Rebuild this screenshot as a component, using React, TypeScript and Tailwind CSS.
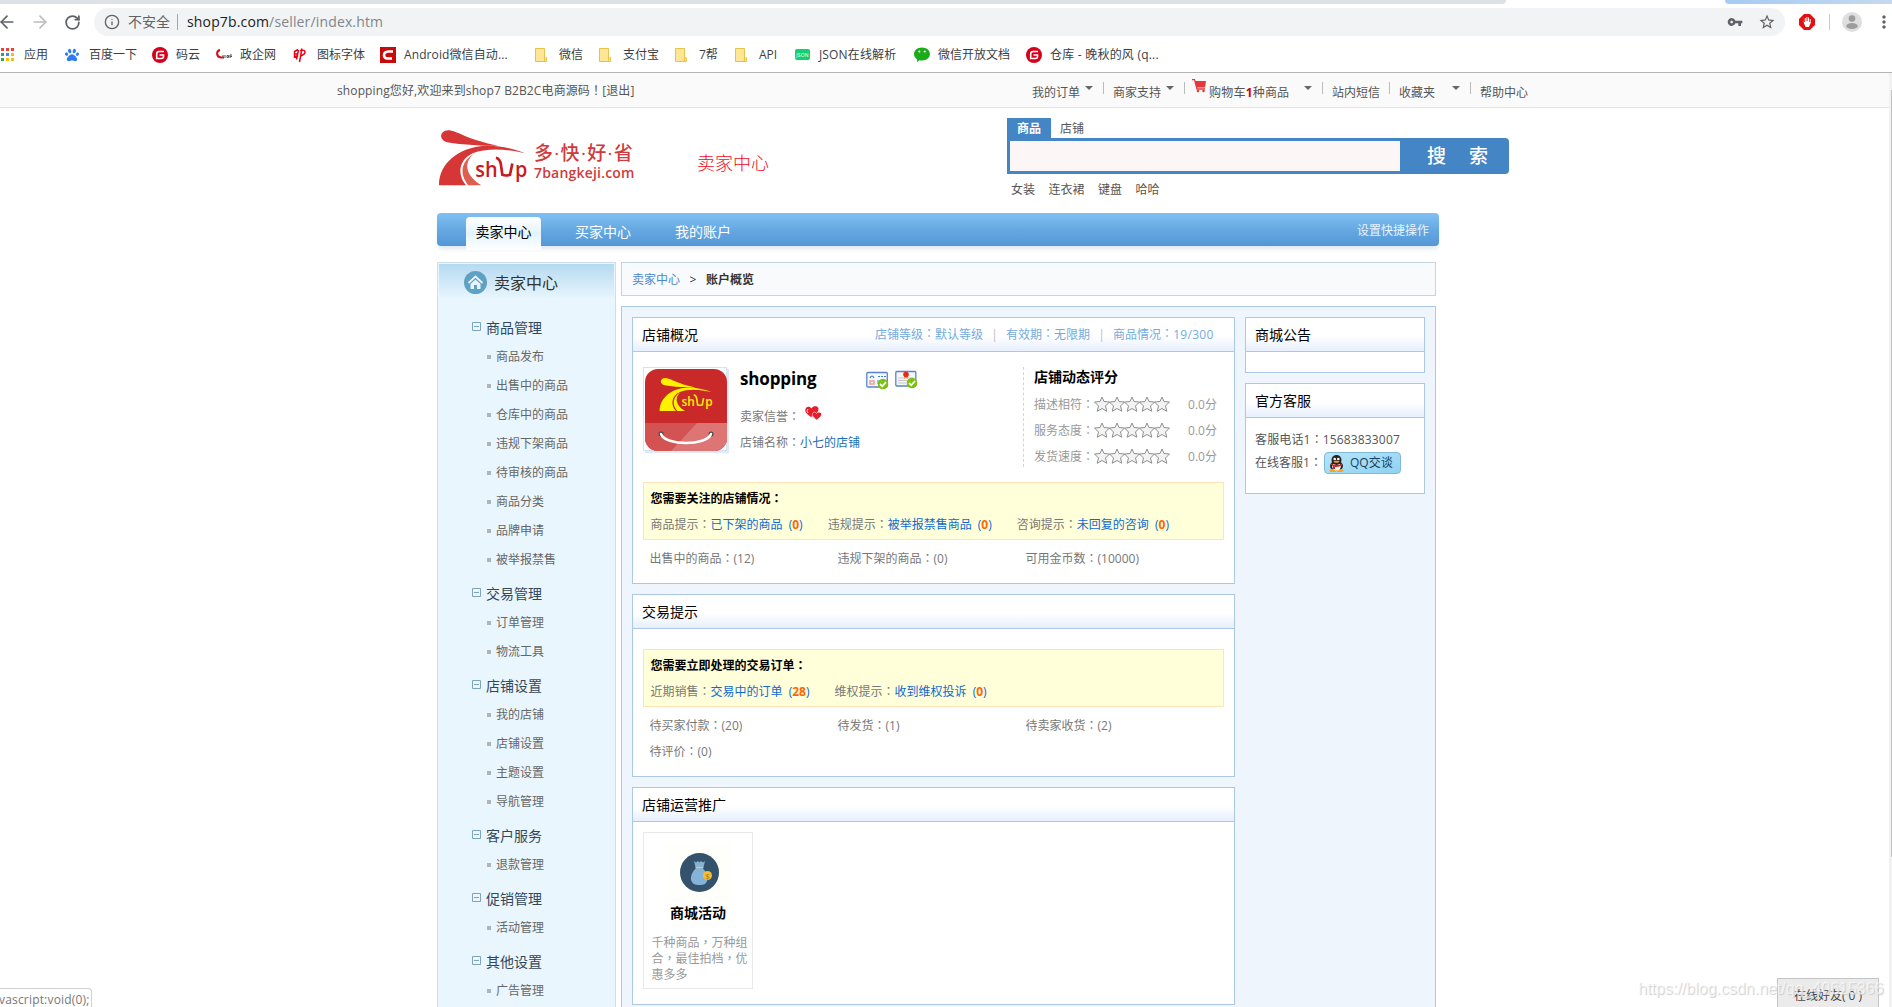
import type { ReactNode } from "react"
import { ArrowLeft, ArrowRight, Info, RotateCw } from "lucide-react"
import { FaPaw } from "react-icons/fa"
import { MdVpnKey, MdStarBorder, MdMoreVert } from "react-icons/md"

const menus = [
  { title: "商品管理", items: ["商品发布", "出售中的商品", "仓库中的商品", "违规下架商品", "待审核的商品", "商品分类", "品牌申请", "被举报禁售"] },
  { title: "交易管理", items: ["订单管理", "物流工具"] },
  { title: "店铺设置", items: ["我的店铺", "店铺设置", "主题设置", "导航管理"] },
  { title: "客户服务", items: ["退款管理"] },
  { title: "促销管理", items: ["活动管理"] },
  { title: "其他设置", items: ["广告管理"] },
]

// Full-width punctuation sits in the middle of its cell in the TC face
function Cn({ text }: { text: string }) {
  return (
    <>
      {text.split(/([：，！])/).map((part, i) =>
        i % 2 ? <span key={i} className="font-['Noto_Sans_CJK_TC',sans-serif] leading-none">{part}</span> : part
      )}
    </>
  )
}

function AppsIcon() {
  const colors = ["#ea4335", "#ea4335", "#ea4335", "#34a853", "#4285f4", "#fbbc05", "#34a853", "#fbbc05", "#fbbc05"]
  return (
    <svg width="14" height="14" viewBox="0 0 14 14">
      {colors.map((c, i) => (
        <rect key={i} x={(i % 3) * 5 + 1} y={Math.floor(i / 3) * 5} width="3" height="3" fill={c} />
      ))}
    </svg>
  )
}

function GiteeIcon() {
  return (
    <svg width="16" height="16" viewBox="0 0 16 16">
      <circle cx="8" cy="8" r="8" fill="#d7001b" />
      <path d="M12 4.500H7.200Q4.700 4.500 4.700 7v4.500h4.800q2 0 2-2V8H7.500" fill="none" stroke="#fff" strokeWidth="1.600" />
    </svg>
  )
}

function FolderIcon() {
  return (
    <svg width="12" height="14" viewBox="0 0 12 14">
      <path d="M.5.5h9v9.300h2v3.700H.5z" fill="#ffe694" stroke="#e8c34c" />
      <path d="M9.500 9.500v4" stroke="#e8c34c" />
    </svg>
  )
}

function GovIcon() {
  return (
    <svg width="16" height="14" viewBox="0 0 16 14">
      <path d="M4 2C0 3 0 9 5 9.500h3" fill="none" stroke="#d0111b" strokeWidth="2" />
      <path d="M7 7v3M9 7v3M11 7.500h1.500v2H11zM14 7v3M14 7h2M14 8.500h2" stroke="#555" fill="none" />
    </svg>
  )
}

function SealIcon() {
  return (
    <svg width="13" height="16" viewBox="0 0 13 16">
      <path d="M5 2.500 1.500 4.500v5.500L5 8.500M1.500 7H5M3.500 12.500 5.500 3M7 3.500q5-1 5 1.500t-4.500 4M9 1.500 6.500 15" fill="none" stroke="#e60012" strokeWidth="1.500" />
    </svg>
  )
}

function CsdnIcon() {
  return (
    <svg width="16" height="16" viewBox="0 0 16 16">
      <rect width="16" height="16" fill="#c90a0a" />
      <path d="M13 4.500H8.500C5 4.500 4 6.500 4 8.300s1 3.200 3.500 3.200H12" fill="none" stroke="#fff" strokeWidth="2.600" />
    </svg>
  )
}

function JsonIcon() {
  return (
    <svg width="15" height="11" viewBox="0 0 15 11">
      <rect width="15" height="11" rx="2" fill="#12d071" />
      <text x="7.500" y="7.500" fontSize="5" fill="#fff" textAnchor="middle" fontFamily="Open Sans">JSON</text>
    </svg>
  )
}

function WechatIcon() {
  return (
    <svg width="16" height="15" viewBox="0 0 16 15">
      <path d="M8 .5c4.400 0 8 2.800 8 6.500s-3.600 6.500-8 6.500c-1 0-1.800-.1-2.600-.3L3 15v-2.700C1.200 11.100 0 9.200 0 7 0 3.300 3.600.5 8 .5z" fill="#1aad19" />
      <circle cx="5.300" cy="4.500" r="1.100" fill="#fff" />
      <circle cx="10.700" cy="4.500" r="1.100" fill="#fff" />
    </svg>
  )
}

const bookmarks: { icon: ReactNode; label: string; cls: string }[] = [
  { icon: <AppsIcon />, label: "应用", cls: "w-[65px]" },
  { icon: <FaPaw className="h-[14px] w-[14px] text-[#2c7df0]" />, label: "百度一下", cls: "w-[87px]" },
  { icon: <GiteeIcon />, label: "码云", cls: "w-[64px]" },
  { icon: <GovIcon />, label: "政企网", cls: "w-[77px]" },
  { icon: <SealIcon />, label: "图标字体", cls: "w-[87px]" },
  { icon: <CsdnIcon />, label: "Android微信自动...", cls: "w-[155px] tracking-[0.1px]" },
  { icon: <FolderIcon />, label: "微信", cls: "w-[64px]" },
  { icon: <FolderIcon />, label: "支付宝", cls: "w-[76px]" },
  { icon: <FolderIcon />, label: "7帮", cls: "w-[60px]" },
  { icon: <FolderIcon />, label: "API", cls: "w-[60px]" },
  { icon: <JsonIcon />, label: "JSON在线解析", cls: "w-[119px] tracking-[0.150px]" },
  { icon: <WechatIcon />, label: "微信开放文档", cls: "w-[112px]" },
  { icon: <GiteeIcon />, label: "仓库 - 晚秋的风 (q...", cls: "w-[140px] tracking-[0.220px]" },
]

function Browser() {
  return (
    <div className="h-[73px] border-b border-[#b4b4b4] bg-white">
      {/* Tab strip */}
      <div className="flex h-1 justify-between">
        <div className="w-[1506px] rounded-br-md bg-[#dee1e6]" />
        <div className="w-[167px] rounded-bl-md bg-gradient-to-r from-[#a5cbf3] to-[#c5d9ee]" />
      </div>

      {/* Address bar */}
      <div className="flex h-9 items-center">
        <ArrowLeft className="-ml-[3px] h-5 w-5 shrink-0 text-[#5f6368]" />
        <ArrowRight className="ml-[13px] h-5 w-5 shrink-0 text-[#babcbe]" />
        <RotateCw className="ml-[14px] h-[17px] w-[17px] shrink-0 text-[#5f6368]" strokeWidth={2.5} />
        <div className="ml-[13px] flex h-7 w-[1691px] shrink-0 items-center rounded-full bg-[#f1f3f4] text-sm text-[#80868b]">
          <Info className="ml-[10px] h-4 w-4 text-[#5f6368]" />
          <span className="ml-2 w-[42px] text-[#5f6368]">不安全</span>
          <span className="ml-[7px] h-4 w-px bg-[#a5a8ab]" />
          <span className="ml-[9px] tracking-[0.150px]"><span className="text-[#202124]">shop7b.com</span>/seller/index.htm</span>
          <MdVpnKey className="ml-auto h-4 w-4 text-[#5f6368]" />
          <MdStarBorder className="mr-[9px] ml-[15px] h-[18px] w-[18px] text-[#5f6368]" />
        </div>
        <svg className="ml-[14px] shrink-0" width="16" height="16" viewBox="0 0 16 16">
          <path d="M5 0h6l5 5v6l-5 5H5l-5-5V5z" fill="#e60f12" />
          <path d="M4.800 5v4l1.800 4h3.300l1.800-4V5h-1v3h-.7V3.500h-1V7h-.6V3h-1v4h-.6V4h-1v4h-.7z" fill="#fff" />
        </svg>
        <span className="ml-[14px] h-4 w-px shrink-0 bg-[#c8cacc]" />
        <svg className="ml-[12px] shrink-0" width="20" height="20" viewBox="0 0 20 20">
          <circle cx="10" cy="10" r="10" fill="#dedede" />
          <circle cx="10" cy="6.500" r="3.300" fill="#9c9c9c" />
          <ellipse cx="10" cy="14" rx="5.800" ry="3" fill="#9c9c9c" />
        </svg>
        <MdMoreVert className="-mr-2 ml-[12px] h-5 w-5 shrink-0 text-[#5f6368]" />
      </div>

      {/* Bookmarks */}
      <div className="flex h-7 items-center pt-px text-xs text-[#3c4043]">
        {bookmarks.map((b) => (
          <div key={b.label} className={`flex shrink-0 items-center whitespace-nowrap ${b.cls}`}>
            <span className="flex w-6 shrink-0">{b.icon}</span>
            {b.label}
          </div>
        ))}
      </div>
    </div>
  )
}

function Caret({ className = "" }: { className?: string }) {
  return (
    <svg className={`-mt-[10px] shrink-0 ${className}`} width="8" height="4" viewBox="0 0 8 4">
      <path d="M0 0h8L4 4z" fill="#666" />
    </svg>
  )
}

function Sep({ className = "" }: { className?: string }) {
  return <span className={`-mt-[10px] h-3 w-px shrink-0 bg-[#bbb] ${className}`} />
}

function TopBar() {
  return (
    <div className="flex h-[35px] items-center border-b border-[#e3e3e3] bg-[#fafafa] pt-px text-xs text-[#555]">
      <span className="ml-[337px] w-[695px] tracking-[0.120px]"><Cn text="shopping您好,欢迎来到shop7 B2B2C电商源码！[退出]" /></span>
      <div className="flex items-center pt-[4px]">
        <span>我的订单</span>
        <Caret className="ml-[5px]" />
        <Sep className="mr-[9px] ml-[10px]" />
        <span>商家支持</span>
        <Caret className="ml-[5px]" />
        <Sep className="ml-[10px]" />
        <svg className="-mt-[13px] ml-[7px]" width="14" height="14" viewBox="0 0 14 14">
          <path d="M0 .7h2.500L5 10h8" fill="none" stroke="#e4393c" strokeWidth="1.300" />
          <path d="M3 2h11l-1 6.500H4.700z" fill="#e4393c" />
          <circle cx="6" cy="12" r="1.300" fill="#e4393c" />
          <circle cx="11.500" cy="12" r="1.300" fill="#e4393c" />
        </svg>
        <span className="ml-[3px] w-[95px] tracking-[0.2px]">购物车<b className="text-[#c00]">1</b>种商品</span>
        <Caret />
        <Sep className="mr-[9px] ml-[10px]" />
        <span>站内短信</span>
        <Sep className="mr-[9px] ml-[9px]" />
        <span className="w-[53px]">收藏夹</span>
        <Caret />
        <Sep className="mr-[9px] ml-[10px]" />
        <span>帮助中心</span>
      </div>
    </div>
  )
}

// Road-shaped "shop" mark, used in the header and on the shop avatar
function ShopMark({ color, accent, text, className }: { color: string; accent: string; text: string; className: string }) {
  return (
    <svg className={className} viewBox="24 57 270 170">
      <path d="M54 60C80 60 105 86 205 107C165 107 95 104 52 96C24 88 30 61 54 60Z" fill={color} />
      <path d="M287 130C240 112 200 105 165 107C85 112 27 160 27 225H108C82 195 84 150 128 129C170 112 235 116 287 130Z" fill={color} />
      <path d="M115 225C88 192 92 155 130 132C98 160 110 198 154 225Z" fill={accent} />
      <text x="136" y="200" fontSize="66" fontWeight="600" fontFamily="Open Sans" fill={text} textLength="67" lengthAdjust="spacingAndGlyphs">sh</text>
      <path d="M198 143Q211 147 213 165L217 194Q228 198 240 194L247 160" fill="none" stroke={text} strokeWidth="8" />
      <text x="255" y="200" fontSize="66" fontWeight="600" fontFamily="Open Sans" fill={text} textLength="37" lengthAdjust="spacingAndGlyphs">p</text>
    </svg>
  )
}

function Header() {
  return (
    <div className="flex h-[105px] items-start">
      <ShopMark className="mt-[21px] ml-[438px] h-[57px] w-[90px]" color="#d63635" accent="#dc5f52" text="#c91a1c" />
      <div className="mt-[33px] ml-[6px] w-[163px] font-medium text-[#d03a3c]">
        <div className="text-[19px] leading-[24px] tracking-[1.300px]">多·快·好·省</div>
        <div className="-mt-[2px] text-[14px] leading-[20px] font-semibold tracking-[0.2px]">7bangkeji.com</div>
      </div>
      <div className="mt-[42px] w-[310px] text-[18px] leading-[26px] font-light text-[#f50a1a]">卖家中心</div>
      <div className="mt-[10px] text-xs text-[#555]">
        <div className="flex h-5 leading-[22px]">
          <span className="w-[44px] bg-[#4485c5] text-center font-bold text-white">商品</span>
          <span className="ml-[9px]">店铺</span>
        </div>
        <div className="flex h-9 w-[502px] items-center rounded-r bg-[#4485c5] pl-[3px]">
          <div className="h-[30px] w-[390px] bg-[#fdf6f6]" />
          <div className="flex flex-1 justify-between pt-[2px] pr-[21px] pl-[27px] text-[19px] font-medium text-white">
            <span>搜</span>
            <span>索</span>
          </div>
        </div>
        <div className="mt-[7px] flex gap-[13.500px] pl-1 leading-[18px]">
          <span>女装</span>
          <span>连衣裙</span>
          <span>键盘</span>
          <span>哈哈</span>
        </div>
      </div>
    </div>
  )
}

function Nav() {
  return (
    <div className="h-[49px] w-[1002px]">
      <div className="flex h-[33px] rounded-sm bg-gradient-to-b from-[#80c1f4] via-[#66a8e1] to-[#5397d6] text-sm leading-[30px] text-white shadow-[0_4px_4px_-1px_#dfe8f0]">
        <span className="mt-1 ml-[29px] h-[33px] w-[75px] rounded-t bg-gradient-to-b from-white via-[#e4f3fd] to-white text-center text-black">卖家中心</span>
        <span className="mt-1 ml-[34px]">买家中心</span>
        <span className="mt-1 ml-[44px]">我的账户</span>
        <span className="mt-[3px] mr-[10px] ml-auto text-xs leading-[30px] text-[#e6f4ff]">设置快捷操作</span>
      </div>
    </div>
  )
}

function Sidebar() {
  return (
    <div className="w-[179px] shrink-0 border border-[#cfdfe9] bg-[#eaf6fd] p-px">
      <div className="flex h-[34px] items-center bg-gradient-to-b from-[#b4daf0] to-[#e8f5fd] pl-[25px] text-base text-[#333]">
        <svg className="mt-[3px] mr-[7px]" width="23" height="23" viewBox="0 0 23 23">
          <circle cx="11.500" cy="11.500" r="11.500" fill="#5fa1c4" />
          <path d="M4.500 12 11.500 5.500l7 6.500" fill="none" stroke="#e6f4fb" strokeWidth="1.800" />
          <path d="M6.500 13l5-4.600 5 4.600v5h-3.500v-4h-3v4H6.500z" fill="#e6f4fb" />
        </svg>
        <span className="mt-[4px]">卖家中心</span>
      </div>
      <div className="pt-[10px]">
        {menus.map((m) => (
          <div key={m.title} className="pt-[5px]">
            <div className="flex h-[29px] items-center pl-[33px] text-sm text-[#33475b]">
              <svg className="-mt-[3px] mr-[5px]" width="9" height="9" viewBox="0 0 9 9">
                <path d="M.5.5h8v8h-8zM2 4.500h5" fill="none" stroke="#7fa5bd" />
              </svg>
              {m.title}
            </div>
            {m.items.map((item) => (
              <div key={item} className="flex h-[29px] items-center pl-[48px] text-xs text-[#666]">
                <span className="mr-[5px] h-1 w-1 bg-[#b3b3b3]" />
                {item}
              </div>
            ))}
          </div>
        ))}
      </div>
    </div>
  )
}

function Panel({ title, extra, className = "", children }: { title: string; extra?: ReactNode; className?: string; children?: ReactNode }) {
  return (
    <div className={`border border-[#abc8e6] bg-white ${className}`}>
      <div className="flex h-[34px] items-center justify-between border-b border-[#abc8e6] bg-gradient-to-b from-white from-55% to-[#e6effd] pl-[9px] text-sm text-black">
        <span>{title}</span>
        {extra}
      </div>
      {children}
    </div>
  )
}

function Notice({ title, items, className = "" }: { title: string; items: { label: string; link: string; count: number }[]; className?: string }) {
  return (
    <div className={`mx-[10px] h-[58px] border border-[#ffe2b8] bg-[#ffffda] pt-[3px] pl-[6.500px] leading-[26px] text-[#777] ${className}`}>
      <div className="font-bold text-black"><Cn text={title} /></div>
      <div className="flex gap-[25px]">
        {items.map((i) => (
          <span key={i.label}>
            <Cn text={`${i.label}：`} />
            <span className="text-[#1069d0]">
              {i.link} <span className="ml-[3px]">(<b className="text-[#ff6600]">{i.count}</b>)</span>
            </span>
          </span>
        ))}
      </div>
    </div>
  )
}

function Stats({ items }: { items: string[] }) {
  return (
    <div className="flex flex-wrap pt-[6px] pl-[16.500px] leading-[26px] text-[#777]">
      {items.map((s) => (
        <span key={s} className="w-[188px]"><Cn text={s} /></span>
      ))}
    </div>
  )
}

function Stars() {
  return (
    <svg className="-mt-[2px]" width="76" height="16" viewBox="0 0 76 16">
      {[0, 15, 30, 45, 60].map((x) => (
        <path
          key={x}
          transform={`translate(${x} 0)`}
          d="M8 1l2 4.500 5.500.500-4 4 1.300 5.300L8 12.500l-4.800 2.800L4.500 10l-4-4 5.500-.5z"
          fill="#f3f3f3"
          stroke="#8f8f8f"
        />
      ))}
    </svg>
  )
}

function Check() {
  return (
    <>
      <circle cx="17" cy="13" r="5.300" fill="#7cc010" />
      <path d="M14 13l2.300 2.300L20 11" fill="none" stroke="#fff" strokeWidth="1.800" />
    </>
  )
}

function Avatar() {
  return (
    <div className="h-[84px] w-[84px] border border-[#d3e3f3] pt-px pl-px shadow-[2px_2px_1px_#dfeaf6]">
      <div className="relative h-[82px] w-[82px] overflow-hidden rounded-[13px] bg-[#c92a29]">
        <ShopMark className="mt-[8px] ml-[14px] h-[35px] w-[54px]" color="#fff100" accent="#fff100" text="#fff100" />
        <svg className="absolute bottom-0 left-0" width="82" height="28" viewBox="0 0 82 28">
          <path d="M0 0h82v28H0z" fill="#d35252" />
          <path d="M52 0h30v28H26z" fill="#de7575" />
          <circle cx="16" cy="11" r="2.500" fill="#474340" />
          <circle cx="66" cy="11" r="2.500" fill="#474340" />
          <path d="M16 11c4 12 46 12 50 0" fill="none" stroke="#fff" strokeWidth="2.500" strokeLinecap="round" />
        </svg>
      </div>
    </div>
  )
}

function ShopOverview() {
  return (
    <Panel
      title="店铺概况"
      className="h-[267px]"
      extra={
        <span className="flex w-[359px] text-xs text-[#74abdd]">
          <Cn text="店铺等级：默认等级" />
          <span className="w-[23px] text-center text-[#bbb]">|</span>
          <Cn text="有效期：无限期" />
          <span className="w-[23px] text-center text-[#bbb]">|</span>
          <Cn text="商品情况：" />
          <span className="tracking-[0.3px]">19/300</span>
        </span>
      }
    >
      <div className="flex h-[130px] pt-[15px] pl-[10px] text-[#777]">
        <Avatar />
        <div className="ml-[13px] w-[283px]">
          <div className="flex h-[27px]">
            <span className="w-[126px] text-[17px] leading-[23px] font-bold tracking-[-0.150px] text-black">shopping</span>
            <svg className="mt-[4px]" width="24" height="20" viewBox="0 0 24 20">
              <rect x=".8" y="1.500" width="20.500" height="14.500" rx="1" fill="#f4faff" stroke="#5b83c7" strokeWidth="1.300" />
              <path d="M4 7q2-4 4 0M12 5.500h2m1 0h2m1 0h2M11 10h6M11 12h4" fill="none" stroke="#4381c6" strokeWidth="1.200" />
              <path d="M4 10h4v3H4z" fill="none" stroke="#ef9a9a" strokeWidth="1.500" />
              <Check />
            </svg>
            <svg className="mt-[3px] ml-[5px]" width="24" height="20" viewBox="0 0 24 20">
              <rect x=".8" y="1.500" width="20" height="14.500" rx="1" fill="#f7f7fb" stroke="#5b83c7" strokeWidth="1.300" />
              <path d="M3 8h6m4 0h6M3 10.500h10M3 13h8" stroke="#c4c4cf" />
              <path d="M9 5h4v4l-2-1-2 1z" fill="#f5a623" />
              <circle cx="11" cy="4.500" r="2.800" fill="#e22d1a" />
              <Check />
            </svg>
          </div>
          <div className="flex h-[26px] items-center pt-[20px]">
            <span className="w-[65px]"><Cn text="卖家信誉：" /></span>
            <svg className="-mt-[7px]" width="17" height="15" viewBox="0 0 17 15">
              <path d="M6 11C0 7 0 5 .5 3 1.500 0 5 0 6.500 2.500 8-.5 12 0 13 1.500c2 3-2 7-7 9.500z" fill="#e81d2b" />
              <path d="M11.500 14C7 10.500 7 9 7.500 7.500c1-2 3-1.500 4 0 1-1.500 4-2 5 0 .5 2-1 4-5 6.500z" fill="#e81d2b" stroke="#fff" strokeWidth=".6" />
              <path d="M3 3q-2 2 0 4" fill="none" stroke="#ffd0d0" />
            </svg>
          </div>
          <div className="pt-[15px]"><Cn text="店铺名称：" /><span className="text-[#1a6fb5]">小七的店铺</span></div>
        </div>
        <div className="h-[100px] border-l border-dashed border-[#d5d5d5] pl-[10px] leading-[26px] text-[#999]">
          <div className="mt-[-3px] mb-[2px] text-sm leading-[26px] font-bold text-black">店铺动态评分</div>
          {["描述相符", "服务态度", "发货速度"].map((s) => (
            <div key={s} className="flex h-[26px] items-center">
              <span><Cn text={`${s}：`} /></span>
              <Stars />
              <span className="ml-[18px]">0.0分</span>
            </div>
          ))}
        </div>
      </div>
      <Notice
        title="您需要关注的店铺情况："
        items={[
          { label: "商品提示", link: "已下架的商品", count: 0 },
          { label: "违规提示", link: "被举报禁售商品", count: 0 },
          { label: "咨询提示", link: "未回复的咨询", count: 0 },
        ]}
      />
      <Stats items={["出售中的商品：(12)", "违规下架的商品：(0)", "可用金币数：(10000)"]} />
    </Panel>
  )
}

function TradePanel() {
  return (
    <Panel title="交易提示" className="h-[183px]">
      <Notice
        className="mt-[20px]"
        title="您需要立即处理的交易订单："
        items={[
          { label: "近期销售", link: "交易中的订单", count: 28 },
          { label: "维权提示", link: "收到维权投诉", count: 0 },
        ]}
      />
      <Stats items={["待买家付款：(20)", "待发货：(1)", "待卖家收货：(2)", "待评价：(0)"]} />
    </Panel>
  )
}

function PromotionPanel() {
  return (
    <Panel title="店铺运营推广" className="h-[218px]">
      <div className="mt-[10px] ml-[10px] flex h-[157px] w-[110px] flex-col items-center border border-[#e8e8e8]">
        <div className="mt-[9px] ml-[2px] flex h-[60px] w-[68px] items-center justify-center bg-[#fefffa]">
          <svg width="39" height="39" viewBox="0 0 39 39">
            <circle cx="19.500" cy="19.500" r="19.500" fill="#35526c" />
            <path d="M14 8l2 1.500L18 8l1.500 1.500L21 8l2 1.500L25 8l-1.500 6h-8z" fill="#84b3da" />
            <path d="M16 15c-4 4-5.500 8-5 11.500C12 31 15 32 19.500 32s7-1 8-5.500c.5-3.500-1-7.500-5-11.500z" fill="#84b3da" />
            <path d="M15.500 14.500h8" stroke="#f0c54a" strokeWidth="1.300" />
            <circle cx="27.500" cy="22.500" r="4.500" fill="#f5bd30" />
            <text x="27.500" y="25.500" fontSize="8" textAnchor="middle" fill="#a8741a" fontFamily="Open Sans">$</text>
          </svg>
        </div>
        <div className="text-sm leading-[22px] font-bold text-black">商城活动</div>
        <div className="mt-[11px] ml-[5px] w-[98px] leading-4 text-[#999]"><Cn text="千种商品，万种组合，最佳拍档，优惠多多" /></div>
      </div>
    </Panel>
  )
}

function QQButton() {
  return (
    <span className="flex h-[22px] w-[77px] items-center rounded-sm border border-[#7fb9d3] bg-gradient-to-br from-[#b5e5fa] to-[#8ed2f2] pl-1 text-[#17415c]">
      <svg className="mr-[6px]" width="15" height="17" viewBox="0 0 15 17">
        <ellipse cx="7.500" cy="11" rx="6.500" ry="5" fill="#2a2020" />
        <ellipse cx="4" cy="15.500" rx="3.500" ry="1.500" fill="#f5a31a" />
        <ellipse cx="11" cy="15.500" rx="3.500" ry="1.500" fill="#f5a31a" />
        <ellipse cx="7.500" cy="11.500" rx="4.300" ry="4" fill="#fff" />
        <circle cx="7.500" cy="5" r="5" fill="#2a2020" />
        <circle cx="5.700" cy="4" r="1.300" fill="#fff" />
        <circle cx="9.300" cy="4" r="1.300" fill="#fff" />
        <ellipse cx="7.500" cy="6.800" rx="3" ry="1" fill="#f5a31a" />
        <path d="M2 8.500q5.500 3 11 0v2q-5 2-7 1.500v2H4V11l-2-1z" fill="#e02020" />
      </svg>
      QQ交谈
    </span>
  )
}

export default function App() {
  return (
    <div className="relative h-[1007px] w-full overflow-hidden bg-white font-['Open_Sans','Noto_Sans_CJK_SC',sans-serif]">
      <Browser />
      <TopBar />
      <Header />
      <div className="ml-[437px]">
        <Nav />
        <div className="flex h-[760px] gap-[5px]">
          <Sidebar />
          <div className="w-[815px] text-xs">
            {/* Breadcrumb */}
            <div className="flex h-[34px] items-center border border-[#c3d4e2] bg-[#f9fafc] pt-[2px] pl-[10px] text-[#333]">
              <span className="text-[#4a8acb]">卖家中心</span>
              <span className="w-[26px] text-center">&gt;</span>
              <span className="font-bold">账户概览</span>
            </div>
            <div className="mt-[10px] flex h-[730px] items-start gap-[10px] border border-[#abc8e6] bg-[#eef5fd] p-[10px]">
              <div className="flex w-[603px] flex-col gap-[10px]">
                <ShopOverview />
                <TradePanel />
                <PromotionPanel />
              </div>
              <div className="flex w-[180px] flex-col gap-[10px] text-[#555]">
                <Panel title="商城公告" className="h-[56px]" />
                <Panel title="官方客服" className="h-[111px]">
                  <div className="pt-[10px] pl-[9px] leading-[24px]">
                    <div className="tracking-[0.150px]"><Cn text="客服电话1：15683833007" /></div>
                    <div className="flex h-[22px] items-center">
                      <span className="w-[69px]"><Cn text="在线客服1：" /></span>
                      <QQButton />
                    </div>
                  </div>
                </Panel>
              </div>
            </div>
          </div>
        </div>
      </div>

      {/* Page scrollbar */}
      <div className="absolute top-[73px] right-0 h-[934px] w-[3px] bg-[#f1f1f1]">
        <div className="mt-[17px] ml-[2px] h-[767px] w-px bg-[#c1c1c1]" />
      </div>

      {/* Link status */}
      <div className="absolute bottom-0 left-0 h-[19px] w-[92px] rounded-tr border-t border-r border-[#d0d0d0] bg-white text-xs leading-[22px] tracking-[0.180px] whitespace-nowrap text-[#777]">
        <span className="-ml-px">vascript:void(0);</span>
      </div>

      <div className="absolute right-[13px] bottom-0 h-[29px] w-[102px] border border-b-0 border-[#c4c4c4] bg-[#ebebeb] pt-[4px] text-center text-xs leading-[25px] text-[#444]">
        在线好友( 0 )
      </div>
      <div className="absolute top-[979px] left-[1638px] font-['Liberation_Sans',sans-serif] text-[16px] leading-5 whitespace-nowrap text-white/60 [text-shadow:1px_1px_1px_#ccc]">
        https://blog.csdn.net/qq_40615366
      </div>
    </div>
  )
}
